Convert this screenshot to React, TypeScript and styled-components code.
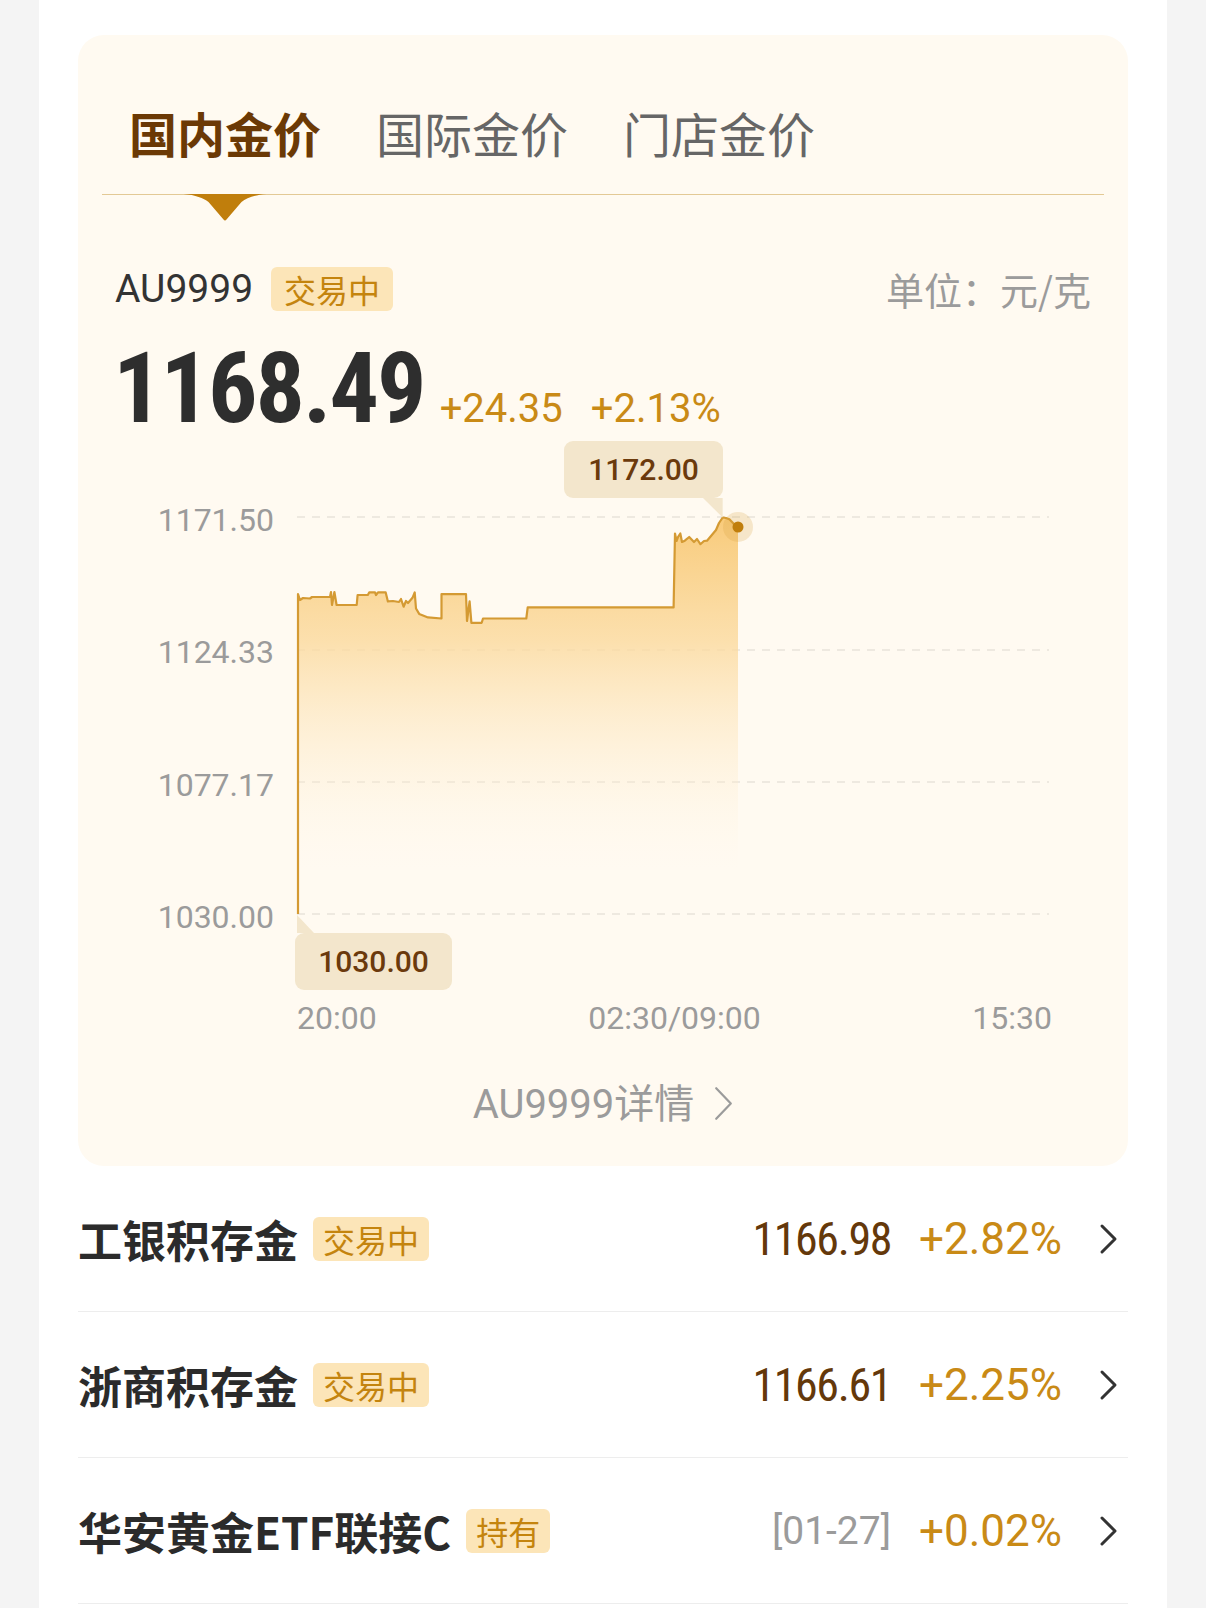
import React from "react";
import styled, { createGlobalStyle } from "styled-components";

const GlobalStyle = createGlobalStyle`
  html, body {
    margin: 0;
    padding: 0;
    background: #f4f4f4;
  }
  body {
    font-family: Roboto, "Noto Sans CJK SC", sans-serif;
  }
`;

const CJK = `"Noto Sans CJK SC", sans-serif`;
const NUM = `Roboto, "Noto Sans CJK SC", sans-serif`;
const NARROW = `"Liberation Sans Narrow", "Roboto Condensed", Roboto, sans-serif`;

const Page = styled.div`
  width: 1128px;
  min-height: 1608px;
  margin: 0 auto;
  padding: 35px 39px 0;
  box-sizing: border-box;
  background: #fff;
`;

const Card = styled.section`
  background: #fffaf1;
  border-radius: 26px;
  padding: 0 24px 41px;
`;

const TabBar = styled.nav`
  display: flex;
  align-items: flex-end;
  gap: 55px;
  height: 159px;
  padding: 0 0 0 27px;
  border-bottom: 1px solid #e3c995;
  & > * {
    margin-bottom: 38px;
  }
`;

const Tab = styled.div<{ $active?: boolean }>`
  position: relative;
  font-family: ${CJK};
  font-size: 48px;
  line-height: 48px;
  font-weight: ${(p) => (p.$active ? 700 : 400)};
  color: ${(p) => (p.$active ? "#6b3905" : "#666")};
`;

const Indicator = styled.svg`
  position: absolute;
  top: calc(100% + 38px);
  left: 50%;
  transform: translateX(-50%);
`;

const InfoRow = styled.div`
  display: flex;
  align-items: center;
  height: 45px;
  margin-top: 71px;
  padding: 0 13px;
`;

const Symbol = styled.span`
  font-family: ${NUM};
  font-size: 39px;
  color: #333;
`;

const Badge = styled.span<{ $gap?: number; $pad?: number }>`
  display: inline-flex;
  align-items: center;
  height: 44px;
  padding: 0 ${(p) => p.$pad ?? 10}px;
  margin-left: ${(p) => p.$gap ?? 15}px;
  border-radius: 6px;
  background: #fce5b8;
  color: #c4840e;
  font-family: ${CJK};
  font-size: 32px;
  line-height: 1;
`;

const Unit = styled.span`
  margin-left: auto;
  font-family: ${CJK};
  font-size: 38px;
  color: #9b9b9b;
`;

const PriceRow = styled.div`
  display: flex;
  align-items: baseline;
  margin-top: 29px;
  padding: 0 11px;
`;

const BigPrice = styled.span`
  font-family: ${NARROW};
  font-weight: 700;
  font-size: 98px;
  line-height: 98px;
  letter-spacing: -2px;
  color: #2e2e2e;
`;

const Change = styled.span<{ $gap: number }>`
  margin-left: ${(p) => p.$gap}px;
  font-family: ${NUM};
  font-size: 40px;
  color: #c98a16;
`;

const ChartGrid = styled.div`
  position: relative;
  display: grid;
  grid-template-columns: 172px 755px;
  column-gap: 23px;
  margin-top: 3px;
`;

const YAxis = styled.div`
  display: flex;
  flex-direction: column;
  justify-content: space-between;
  height: 549px;
  padding: 63px 0 57px;
  box-sizing: border-box;
  text-align: right;
  font-family: ${NUM};
  font-size: 32px;
  line-height: 32px;
  color: #9b9b9b;
`;

const Plot = styled.svg`
  display: block;
  overflow: visible;
`;

const Tooltip = styled.div<{ $left: number; $top: number; $width: number }>`
  position: absolute;
  left: ${(p) => p.$left}px;
  top: ${(p) => p.$top}px;
  width: ${(p) => p.$width}px;
  height: 57px;
  display: flex;
  align-items: center;
  justify-content: center;
  border-radius: 9px;
  background: #f3e6cc;
  font-family: ${NUM};
  font-weight: 500;
  font-size: 30px;
  color: #6b3a0c;
`;

const XAxis = styled.div`
  grid-column: 2;
  display: flex;
  justify-content: space-between;
  margin-top: 12px;
  font-family: ${NUM};
  font-size: 32px;
  line-height: 32px;
  color: #9b9b9b;
`;

const DetailLink = styled.div`
  display: flex;
  align-items: center;
  justify-content: center;
  gap: 20px;
  margin-top: 47px;
  font-family: ${NUM};
  font-size: 40px;
  line-height: 40px;
  color: #9b9b9b;
`;

const Row = styled.div`
  display: flex;
  align-items: center;
  height: 146px;
  box-sizing: border-box;
  padding-right: 10px;
  border-bottom: 1px solid #ededed;
`;

const RowTitle = styled.span`
  font-family: ${CJK};
  font-weight: 700;
  font-size: 44px;
  line-height: 1;
  color: #2b2b2b;
`;

const RowRight = styled.div`
  margin-left: auto;
  display: flex;
  align-items: center;
`;

const RowPrice = styled.span`
  font-family: ${NARROW};
  font-size: 46px;
  letter-spacing: -1.4px;
  color: #64380a;
`;

const RowDate = styled.span`
  font-family: ${NUM};
  font-size: 39px;
  color: #9b9b9b;
`;

const RowPct = styled.span`
  margin-left: 28px;
  font-family: ${NUM};
  font-size: 44px;
  color: #c98a16;
`;

const ChevronSlot = styled.span`
  display: block;
  margin-left: 37px;
`;

const linePts: [number, number][] = [
  [1, 153], [3, 159], [6, 157], [13, 157.5], [15, 156], [33, 156], [34, 151], [35, 164],
  [37.4, 151], [39.6, 164], [59.7, 164], [60.6, 154], [70.8, 154], [72.2, 151.4],
  [78, 151.4], [79, 154], [81, 151.4], [88.7, 151.4], [90.9, 160.4], [96, 160],
  [102, 161], [104, 158], [106.6, 165.7], [109, 160], [111, 162], [115.5, 156.8],
  [117.7, 151.4], [119, 167.5], [122.2, 172.9], [131, 176.4], [144.5, 177.5],
  [144.5, 153.2], [169, 153.2], [170, 180], [172.6, 160.4], [174.4, 181.8],
  [184.7, 181.8], [186, 177.5], [229.3, 177.5], [230.7, 166.4], [376.6, 166.4],
  [378, 92.5], [379.5, 100], [381, 96], [383.3, 92.5], [385, 101], [387.8, 99.7],
  [392.2, 96], [397, 101], [400, 98], [403.4, 103.2], [407, 100], [410, 99.7],
  [414, 95], [419, 89], [422, 82], [425.7, 76.5], [429, 77], [432.4, 78.3],
  [436, 82], [439, 85.4], [441, 86],
];

const linePath =
  "M1 473 " + linePts.map(([x, y]) => `L${x} ${y}`).join(" ");
const areaPath =
  "M" + linePts.map(([x, y]) => `${x} ${y}`).join(" L") + " L441 473 L1 473 Z";

const gridYs = [76, 209, 341, 473];

const rows = [
  { name: "工银积存金", tag: "交易中", price: "1166.98", pct: "+2.82%" },
  { name: "浙商积存金", tag: "交易中", price: "1166.61", pct: "+2.25%" },
  { name: "华安黄金ETF联接C", tag: "持有", date: "[01-27]", pct: "+0.02%" },
];

const ArrowRight = ({ color, w, h, sw }: { color: string; w: number; h: number; sw: number }) => (
  <svg width={w} height={h} viewBox={`0 0 ${w} ${h}`} fill="none" style={{ display: "block" }}>
    <path
      d={`M${sw} ${sw} L${w - sw} ${h / 2} L${sw} ${h - sw}`}
      stroke={color}
      strokeWidth={sw}
      strokeLinecap="round"
      strokeLinejoin="round"
    />
  </svg>
);

export default function App() {
  return (
    <>
      <GlobalStyle />
      <Page>
        <Card>
          <TabBar>
            <Tab $active>
              国内金价
              <Indicator width="83" height="27" viewBox="0 0 83 27">
                <path
                  d="M0 0 H83 C71 1 63 4 58 8 L43 25.5 Q41.5 27.5 40 25.5 L25 8 C20 4 12 1 0 0 Z"
                  fill="#c07e0c"
                />
              </Indicator>
            </Tab>
            <Tab>国际金价</Tab>
            <Tab>门店金价</Tab>
          </TabBar>

          <InfoRow>
            <Symbol>AU9999</Symbol>
            <Badge $gap={18} $pad={13}>交易中</Badge>
            <Unit>单位：元/克</Unit>
          </InfoRow>

          <PriceRow>
            <BigPrice>1168.49</BigPrice>
            <Change $gap={15}>+24.35</Change>
            <Change $gap={28}>+2.13%</Change>
          </PriceRow>

          <ChartGrid>
            <YAxis>
              <span>1171.50</span>
              <span>1124.33</span>
              <span>1077.17</span>
              <span>1030.00</span>
            </YAxis>
            <Plot width="755" height="549" viewBox="0 0 755 549">
              <defs>
                <linearGradient id="goldFill" x1="0" y1="76" x2="0" y2="430" gradientUnits="userSpaceOnUse">
                  <stop offset="0" stopColor="#f8c874" stopOpacity="0.95" />
                  <stop offset="0.35" stopColor="#fbd99c" stopOpacity="0.8" />
                  <stop offset="1" stopColor="#fff6e6" stopOpacity="0" />
                </linearGradient>
              </defs>
              {gridYs.map((y) => (
                <line key={y} x1="0" x2="752" y1={y} y2={y} stroke="#e9e4da" strokeWidth="1.5" strokeDasharray="8 7" />
              ))}
              <path d={areaPath} fill="url(#goldFill)" />
              <path d={linePath} fill="none" stroke="#d49a33" strokeWidth="2.2" strokeLinejoin="round" />
              <polygon points="406,57 425.7,57 425.7,76.5" fill="#f3e6cc" />
              <polygon points="0,474 0,492 17,492" fill="#f3e6cc" />
              <circle cx="441" cy="86" r="15" fill="#d6a03c" fillOpacity="0.22" />
              <circle cx="441" cy="86" r="5.5" fill="#c07e0c" />
            </Plot>
            <Tooltip $left={462} $top={0} $width={159}>1172.00</Tooltip>
            <Tooltip $left={193} $top={492} $width={157}>1030.00</Tooltip>
            <XAxis>
              <span>20:00</span>
              <span>02:30/09:00</span>
              <span>15:30</span>
            </XAxis>
          </ChartGrid>

          <DetailLink>
            <span>
              AU9999<span style={{ fontFamily: CJK }}>详情</span>
            </span>
            <ArrowRight color="#9b9b9b" w={19} h={35} sw={2.2} />
          </DetailLink>
        </Card>

        {rows.map((r) => (
          <Row key={r.name}>
            <RowTitle>{r.name}</RowTitle>
            <Badge>{r.tag}</Badge>
            <RowRight>
              {r.price ? <RowPrice>{r.price}</RowPrice> : <RowDate>{r.date}</RowDate>}
              <RowPct>{r.pct}</RowPct>
              <ChevronSlot>
                <ArrowRight color="#333" w={19} h={32} sw={3} />
              </ChevronSlot>
            </RowRight>
          </Row>
        ))}
      </Page>
    </>
  );
}
